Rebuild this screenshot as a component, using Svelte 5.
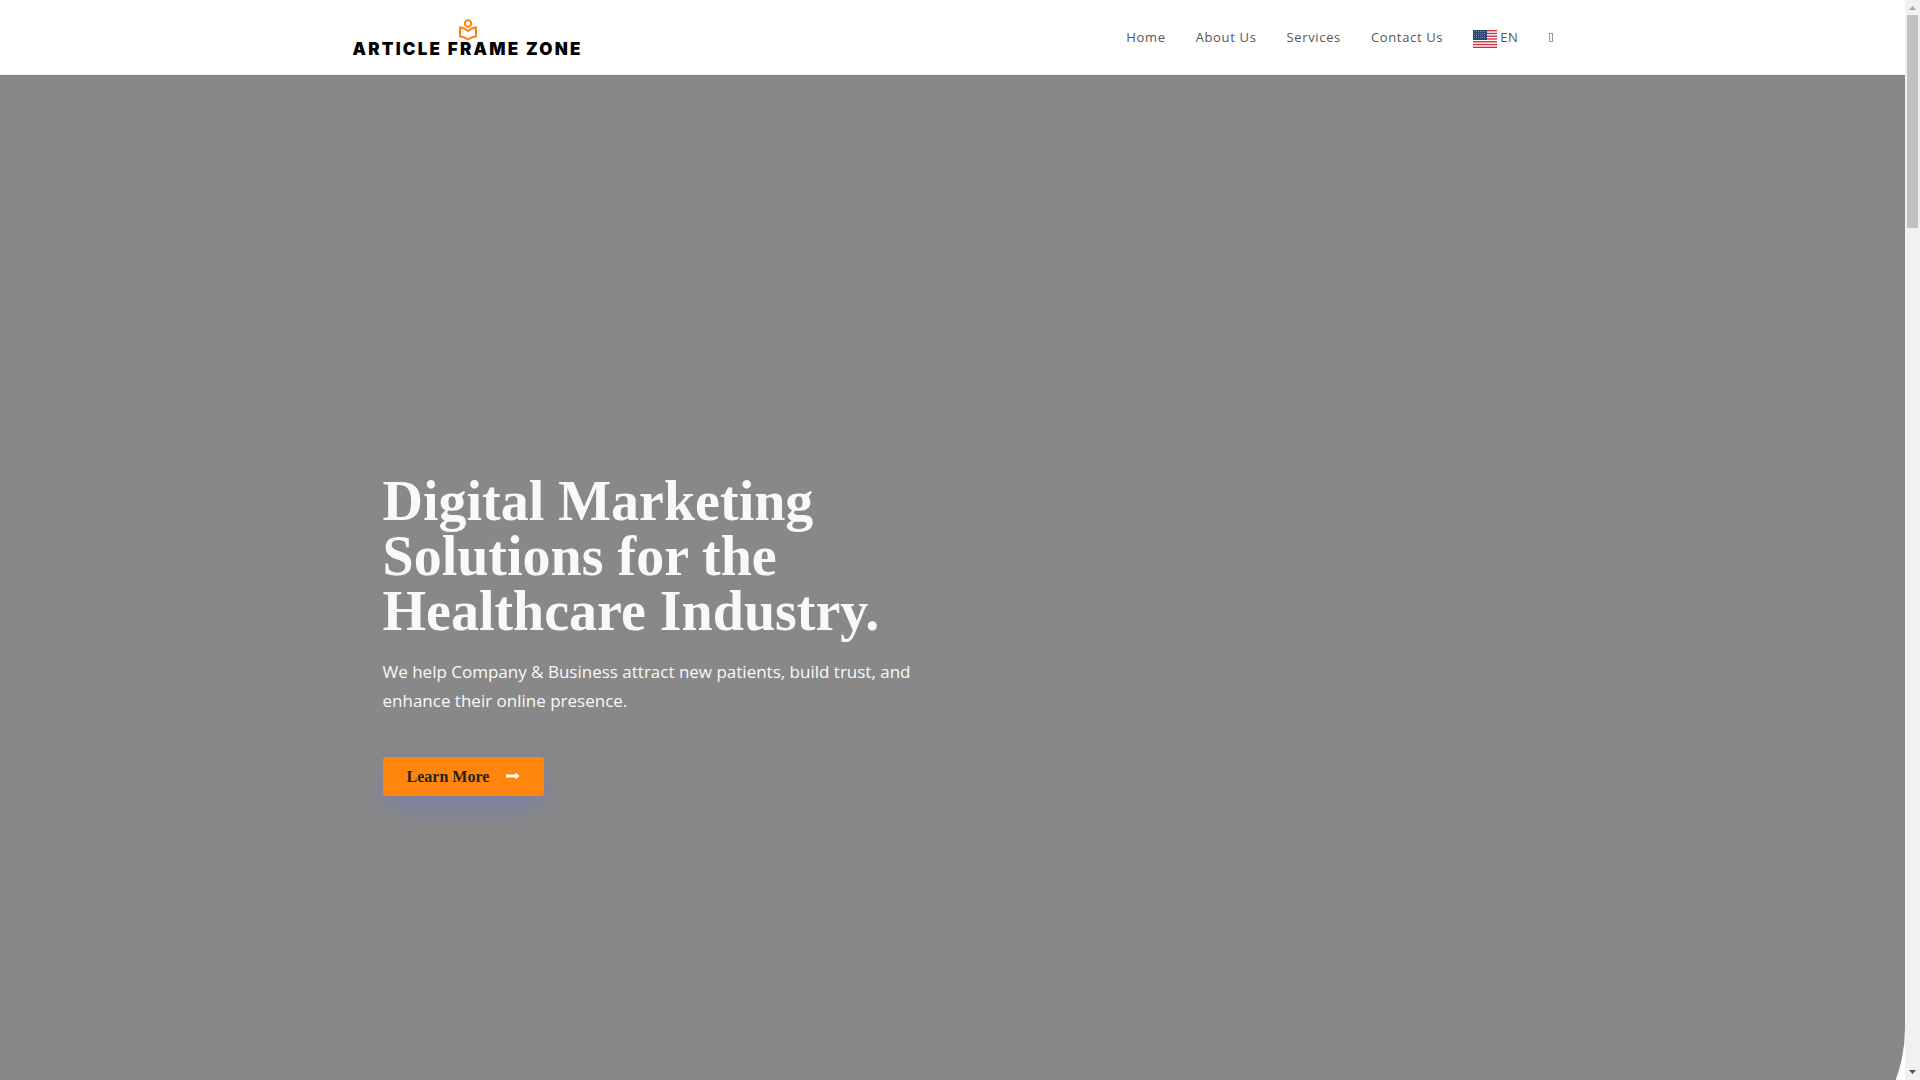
<script lang="ts">
  const links: string[] = ["Home", "About Us", "Services", "Contact Us"];
  const stripes: number[] = [0, 1, 2, 3, 4, 5, 6];
  const starRows: number[] = [1, 3, 5, 7];
  const starCols: number[] = [1, 3, 5, 7, 9, 11];
</script>

<div class="window">
  <div class="page">
    <header>
      <div class="container bar">
        <a class="logo" href="/" aria-label="Article Frame Zone">
          <svg class="reader" viewBox="0 0 20 22" fill="none" stroke="#ff860d" stroke-width="2">
            <circle cx="10" cy="4.500" r="3.200" />
            <path d="M2 8.500c3 0 6 1.500 8 3.500c2-2 5-3.500 8-3.500v9c-3 0-6 1.500-8 3c-2-1.500-5-3-8-3z" />
          </svg>
          <span>ARTICLE FRAME ZONE</span>
        </a>
        <nav>
          {#each links as link}
            <a href="/">{link}</a>
          {/each}
          <a class="lang" href="/">
            <svg class="flag" viewBox="0 0 24 18">
              <rect width="24" height="18" fill="#fff" />
              {#each stripes as i}
                <rect y={i * 2.77} width="24" height="1.38" fill="#c8313e" />
              {/each}
              <rect width="14" height="10" fill="#2f4674" />
              {#each starRows as y}
                {#each starCols as x}
                  <rect {x} {y} width="1" height="1" fill="#7384a8" />
                {/each}
              {/each}
            </svg>
            <span>EN</span>
          </a>
          <a class="search" href="/" aria-label="Search">
            <svg viewBox="0 0 4 9" fill="none" stroke="#999">
              <rect x="0.5" y="0.5" width="3" height="8" />
            </svg>
          </a>
        </nav>
      </div>
    </header>

    <section class="hero">
      <div class="container">
        <div class="intro">
          <h1>Digital Marketing Solutions for the Healthcare Industry.</h1>
          <p>We help Company &amp; Business attract new patients, build trust, and enhance their online presence.</p>
          <a class="button" href="/">
            <span>Learn More</span>
            <svg viewBox="0 0 14 8" fill="#fff">
              <path d="M0 2.500h9.500V.5l4 3.500l-4 3.500v-2H0z" />
            </svg>
          </a>
        </div>
      </div>
    </section>
  </div>

  <div class="scrollbar" aria-hidden="true">
    <svg viewBox="0 0 7 4"><path d="M0 4L3.500 0L7 4z" fill="#a3a3a3" /></svg>
    <div class="track"><div class="thumb"></div></div>
    <svg viewBox="0 0 7 4"><path d="M0 0L3.500 4L7 0z" fill="#505050" /></svg>
  </div>
</div>

<style>
  .window {
    display: flex;
    height: 100vh;
    overflow: hidden;
    background: #fff;
  }

  .page {
    flex: 1;
    min-width: 0;
  }

  .container {
    width: 100%;
    max-width: 1200px;
    margin: 0 auto;
  }

  a {
    text-decoration: none;
  }

  header {
    border-bottom: 1px solid #f1f1f1;
  }

  .bar {
    display: flex;
    justify-content: space-between;
    height: 74px;
  }

  .logo {
    display: flex;
    flex-direction: column;
    align-items: center;
    padding-top: 19px;
    color: #000;
    font: 900 17px/17px Inter, sans-serif;
    letter-spacing: 0.13em;
  }

  .reader {
    width: 20px;
    height: 22px;
  }

  nav {
    display: flex;
    font: 13px/74px "Open Sans", sans-serif;
    letter-spacing: 0.05em;
  }

  nav a {
    padding: 0 15px;
    color: #555;
  }

  nav a:hover {
    color: #ff860d;
  }

  .lang {
    display: flex;
    align-items: center;
    gap: 3px;
  }

  .flag {
    width: 24px;
    height: 18px;
    margin-top: 4px;
  }

  nav .search {
    display: flex;
    align-items: center;
    padding-right: 0;
  }

  .search svg {
    width: 4px;
    height: 9px;
  }

  .hero {
    display: flex;
    align-items: center;
    min-height: 1103px;
    background: #888;
    border-bottom-right-radius: 150px;
  }

  .intro {
    width: 560px;
    padding: 16px 30px 0;
  }

  h1 {
    margin: 0 0 18px;
    color: #f9f9f9;
    font: bold 56px/55px "Liberation Serif", serif;
  }

  p {
    margin: 0 0 42px;
    color: #f9f9f9;
    font: 17px/29px "Open Sans", sans-serif;
  }

  .button {
    display: inline-flex;
    align-items: center;
    gap: 17px;
    padding: 12px 24px;
    border-radius: 3px;
    background: #ff860d;
    box-shadow: 0 10px 30px -5px rgba(92, 103, 255, 0.4);
    color: #222;
    font: bold 16px/15px "Liberation Serif", serif;
  }

  .button svg {
    width: 14px;
    height: 8px;
  }

  .scrollbar {
    display: flex;
    flex-direction: column;
    align-items: center;
    width: 15px;
    padding: 6px 0;
    box-sizing: border-box;
    background: #f1f1f1;
  }

  .scrollbar svg {
    width: 7px;
    height: 4px;
  }

  .track {
    flex: 1;
    padding-top: 5px;
  }

  .thumb {
    width: 11px;
    height: 213px;
    background: #c1c1c1;
  }
</style>
